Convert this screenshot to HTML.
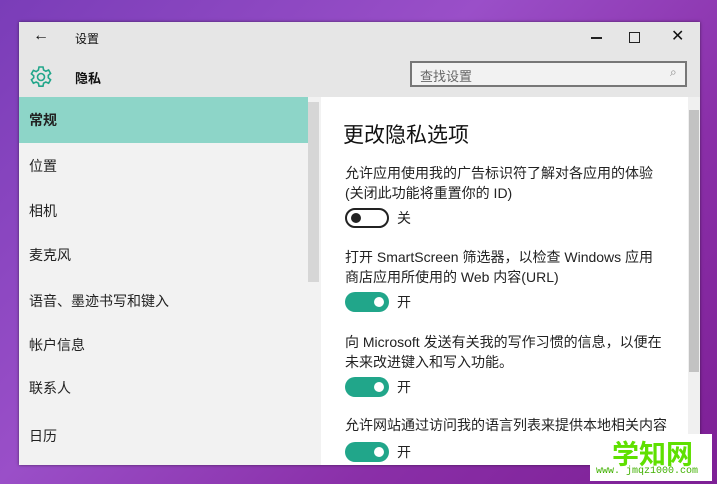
<!DOCTYPE html><html><head><meta charset="utf-8"><style>
body{margin:0;width:717px;height:484px;overflow:hidden;background:linear-gradient(135deg,#7a3db8 0%,#9a4fc8 40%,#8a2fa8 70%,#7d1f95 100%);font-family:"Liberation Sans","Noto Sans CJK SC",sans-serif;position:relative}
.win{position:absolute;left:19px;top:22px;width:681px;height:443px;background:#f2f2f2;box-shadow:0 0 3px rgba(0,0,0,.5)}
.t{position:absolute;font-size:13px;color:#111;white-space:nowrap}
.nav{position:absolute;left:0;width:289px;height:46px;line-height:46px;padding-left:10px;box-sizing:border-box;font-size:14px;color:#222}
.pane{position:absolute;left:302px;top:75px;width:367px;height:368px;background:#fff}
.sw{position:absolute;width:44px;height:20px;border-radius:10px;box-sizing:border-box}
.on{background:#21a68a}.on::after{content:"";position:absolute;right:5px;top:5px;width:10px;height:10px;border-radius:50%;background:#fff}
.off{border:2px solid #222}.off::after{content:"";position:absolute;left:4px;top:3px;width:10px;height:10px;border-radius:50%;background:#222}
.p{position:absolute;left:24px;font-size:14px;line-height:20px;color:#222;width:350px;white-space:nowrap}
</style></head><body>
<div class="win">
<div style="position:absolute;left:0;top:0;width:681px;height:75px;background:#e6e6e6"></div>
<div class="t" style="left:14px;top:5px;font-size:16px">←</div>
<div class="t" style="left:56px;top:8px;font-size:12px">设置</div>
<div style="position:absolute;left:572px;top:15px;width:11px;height:1.5px;background:#222"></div>
<div style="position:absolute;left:610px;top:10px;width:9px;height:9px;border:1.5px solid #222"></div>
<div class="t" style="left:652px;top:4px;font-size:16px">✕</div>
<svg style="position:absolute;left:10px;top:43px" width="24" height="24" viewBox="0 0 24 24"><path d="M10 2h4l.6 3 2.2 1.2 2.8-1.2 2 3.4-2.3 2v2.4l2.3 2-2 3.4-2.8-1.2-2.2 1.2-.6 3h-4l-.6-3-2.2-1.2-2.8 1.2-2-3.4 2.3-2V10.8l-2.3-2 2-3.4 2.8 1.2L9.4 5z" fill="none" stroke="#21a68a" stroke-width="1.6"/><circle cx="12" cy="12" r="3.5" fill="none" stroke="#21a68a" stroke-width="1.6"/></svg>
<div class="t" style="left:56px;top:46px;font-weight:bold;font-size:13px">隐私</div>
<div style="position:absolute;left:391px;top:39px;width:277px;height:26px;border:2px solid #777;box-sizing:border-box;background:#f2f2f2"></div>
<div class="t" style="left:401px;top:44px;color:#666">查找设置</div>
<div class="t" style="left:651px;top:43px;color:#888;font-size:12px">⌕</div>
<div class="nav" style="top:75px;background:#8dd5c8;font-weight:bold">常规</div>
<div class="nav" style="top:121px">位置</div>
<div class="nav" style="top:166px">相机</div>
<div class="nav" style="top:210px">麦克风</div>
<div class="nav" style="top:256px">语音、墨迹书写和键入</div>
<div class="nav" style="top:300px">帐户信息</div>
<div class="nav" style="top:343px">联系人</div>
<div class="nav" style="top:391px">日历</div>
<div style="position:absolute;left:289px;top:80px;width:11px;height:180px;background:#d6d6d6"></div>
<div class="pane">
<div style="position:absolute;left:22px;top:22px;font-size:21px;color:#111">更改隐私选项</div>
<div class="p" style="top:66px">允许应用使用我的广告标识符了解对各应用的体验<br>(关闭此功能将重置你的 ID)</div>
<div class="sw off" style="left:24px;top:111px"></div><div class="p" style="left:76px;top:111px">关</div>
<div class="p" style="top:150px">打开 SmartScreen 筛选器，以检查 Windows 应用<br>商店应用所使用的 Web 内容(URL)</div>
<div class="sw on" style="left:24px;top:195px"></div><div class="p" style="left:76px;top:195px">开</div>
<div class="p" style="top:235px">向 Microsoft 发送有关我的写作习惯的信息，以便在<br>未来改进键入和写入功能。</div>
<div class="sw on" style="left:24px;top:280px"></div><div class="p" style="left:76px;top:280px">开</div>
<div class="p" style="top:318px">允许网站通过访问我的语言列表来提供本地相关内容</div>
<div class="sw on" style="left:24px;top:345px"></div><div class="p" style="left:76px;top:345px">开</div>
</div>
<div style="position:absolute;left:669px;top:75px;width:12px;height:368px;background:#f0f0f0"></div>
<div style="position:absolute;left:670px;top:88px;width:10px;height:262px;background:#c2c2c2"></div>
</div>
<div style="position:absolute;left:590px;top:434px;width:122px;height:47px;background:#fff"></div>
<div style="position:absolute;left:612px;top:433px;font-size:27px;font-weight:bold;color:#5fe000;font-family:'Noto Sans CJK SC',sans-serif;white-space:nowrap">学知网</div>
<div style="position:absolute;left:596px;top:466px;font-size:10px;color:#40b000;font-family:'Liberation Mono',monospace;white-space:nowrap">www. jmqz1000.com</div>
</body></html>
